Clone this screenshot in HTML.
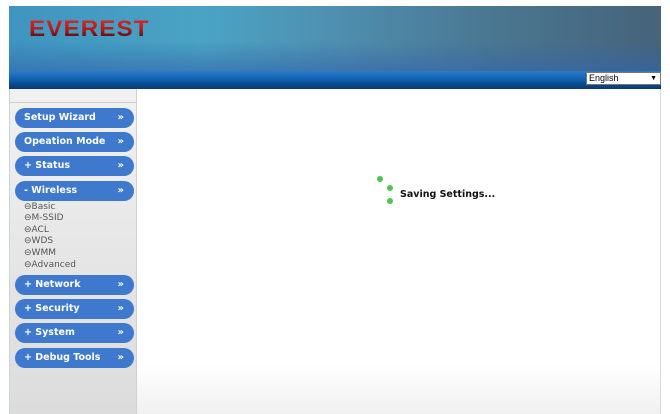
<!DOCTYPE html>
<html><head><meta charset="utf-8"><style>
*{margin:0;padding:0;box-sizing:border-box}
body{width:670px;height:414px;background:#fff;position:relative;overflow:hidden;font-family:Verdana,"DejaVu Sans",sans-serif}
#banner{position:absolute;left:9px;top:6px;width:652px;height:65px;background:linear-gradient(90deg,#3f95c0 0%,#4aa3c4 30%,#4f8fb0 50%,#4a7690 75%,#46637a 100%)}
#banner:after{content:"";position:absolute;left:0;right:0;bottom:0;height:30px;background:linear-gradient(180deg,rgba(60,110,180,0),rgba(50,100,170,.6))}
#logo{position:absolute;left:20px;top:12px;font:bold 22px/1 "Liberation Sans",sans-serif;letter-spacing:1px;color:#a8171b;background:linear-gradient(180deg,#e02a25 0%,#b81a1a 50%,#3a0a0a 100%);-webkit-background-clip:text;background-clip:text;-webkit-text-fill-color:transparent;transform:scaleX(1.1);transform-origin:left}
#bar{position:absolute;left:9px;top:71px;width:652px;height:18px;background:linear-gradient(180deg,#2a7ccc 0%,#1062b0 45%,#0a4a8c 75%,#0a3a70 100%)}
#sel{position:absolute;left:586px;top:72px;width:75px;height:13px;background:#fff;border:1px solid #777;font:9px "Liberation Sans",sans-serif;padding-left:2px;line-height:11px}
#sel span{position:absolute;right:3px;top:0;font-size:7px}
#side{position:absolute;left:9px;top:89px;width:128px;height:325px;background:linear-gradient(180deg,#f2f2f2,#e4e4e4 60%,#dcdcdc);border-left:1px solid #c8d4dc;border-right:1px solid #d0d0d0}
#side .top{height:14px;border-bottom:1px solid #ccc;background:#f0f0f0}
.btn{position:absolute;left:5px;width:119px;height:20px;border-radius:10px;background:#3f79cd;color:#fff;font:bold 9.5px/20px Verdana,"DejaVu Sans",sans-serif;padding-left:9px}
.btn:after{content:"»";position:absolute;right:10px;top:0;font-size:10px}
.sub{position:absolute;left:14px;font:9px/1 Verdana,"DejaVu Sans",sans-serif;color:#555}
#content{position:absolute;left:137px;top:89px;width:524px;height:325px;background:linear-gradient(180deg,#fff 0%,#fff 85%,#f0f0f0 100%);border-right:1px solid #cfdbe3}
.dot{position:absolute;width:6px;height:6px;border-radius:50%;background:#4fc44f}
#msg{position:absolute;left:400px;top:189px;font:bold 9.5px Verdana,"DejaVu Sans",sans-serif;color:#111}
</style></head><body>
<div id="banner"><div id="logo">EVEREST</div></div>
<div id="bar"></div>
<div id="sel">English<span>▼</span></div>
<div id="side"><div class="top"></div>
<div class="btn" style="top:19px">Setup Wizard</div>
<div class="btn" style="top:43px">Opeation Mode</div>
<div class="btn" style="top:67px">+ Status</div>
<div class="btn" style="top:92px">- Wireless</div>
<div class="sub" style="top:114px">⊖Basic</div>
<div class="sub" style="top:125px">⊖M-SSID</div>
<div class="sub" style="top:137px">⊖ACL</div>
<div class="sub" style="top:148px">⊖WDS</div>
<div class="sub" style="top:160px">⊖WMM</div>
<div class="sub" style="top:172px">⊖Advanced</div>
<div class="btn" style="top:186px">+ Network</div>
<div class="btn" style="top:210px">+ Security</div>
<div class="btn" style="top:234px">+ System</div>
<div class="btn" style="top:259px">+ Debug Tools</div>
</div>
<div id="content"></div>
<div class="dot" style="left:377px;top:176px"></div>
<div class="dot" style="left:387px;top:185px"></div>
<div class="dot" style="left:387px;top:198px"></div>
<div id="msg">Saving Settings...</div>
</body></html>
